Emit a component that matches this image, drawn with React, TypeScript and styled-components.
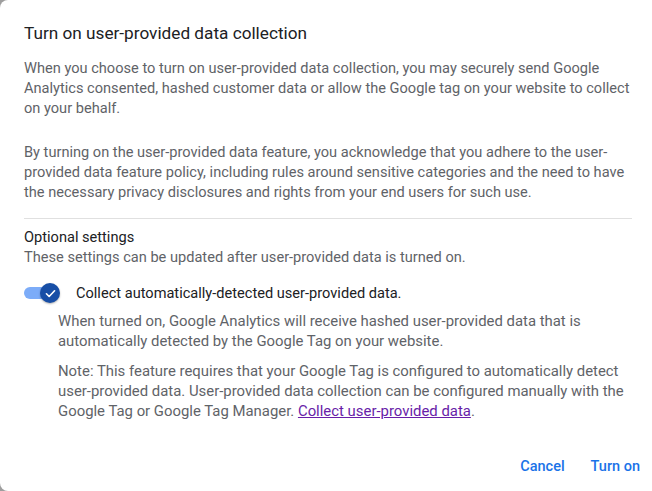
import React from 'react';
import styled, {createGlobalStyle} from 'styled-components';

const GlobalStyle = createGlobalStyle`
  html, body {
    margin: 0;
    padding: 0;
    background: #9e9e9e;
  }
  body {
    font-family: Roboto, "Liberation Sans", Arial, sans-serif;
    -webkit-font-smoothing: antialiased;
  }
`;

const Dialog = styled.div`
  width: 652px;
  height: 491px;
  box-sizing: border-box;
  background: #fff;
  border-radius: 8px 0 0 8px;
  display: flex;
  flex-direction: column;
`;

const Body = styled.div`
  flex: 1;
  padding: 21px 20px 0 24px;
`;

const Title = styled.h2`
  margin: 0 0 13px;
  font-size: 17.2px;
  line-height: 24px;
  font-weight: 400;
  color: #202124;
`;

const Paragraph = styled.p<{$gap: number}>`
  margin: 0 0 ${p => p.$gap}px;
  font-size: 14.6px;
  line-height: 20px;
  color: #5f6368;
`;

const Divider = styled.hr`
  border: none;
  border-top: 1px solid #e0e0e0;
  margin: 0 0 8px;
`;

const SectionTitle = styled.div`
  font-size: 14.6px;
  line-height: 20px;
  color: #202124;
`;

const SectionHint = styled.div`
  font-size: 14.6px;
  line-height: 20px;
  color: #5f6368;
`;

const ToggleRow = styled.label`
  display: flex;
  align-items: center;
  gap: 16px;
  margin-top: 16px;
  font-size: 14.6px;
  line-height: 20px;
  color: #202124;
  cursor: pointer;
`;

const Toggle = styled.span`
  position: relative;
  display: inline-block;
  width: 36px;
  height: 20px;
  flex: none;
`;

const Track = styled.span`
  position: absolute;
  left: 0;
  top: 4px;
  width: 30px;
  height: 12px;
  border-radius: 6px;
  background: #7cacf8;
`;

const Thumb = styled.span`
  position: absolute;
  right: 0;
  top: 0;
  width: 20px;
  height: 20px;
  border-radius: 50%;
  background: #174ea6;
  display: flex;
  align-items: center;
  justify-content: center;
  box-shadow: 0 1px 2px rgba(0, 0, 0, 0.3);
`;

const Details = styled.div`
  padding-left: 34px;
  margin-top: 8px;
`;

const Note = styled.p`
  margin: 0 0 10px;
  font-size: 14.9px;
  line-height: 20px;
  color: #5f6368;
`;

const Link = styled.a`
  color: #681da8;
  text-decoration: underline;
`;

const Actions = styled.div`
  display: flex;
  justify-content: flex-end;
  gap: 2px;
  padding: 0 0 6px;
`;

const TextButton = styled.button`
  background: none;
  border: none;
  padding: 8px 12px;
  font-family: Roboto, "Liberation Sans", Arial, sans-serif;
  font-size: 14.5px;
  font-weight: 500;
  line-height: 20px;
  color: #1a73e8;
  cursor: pointer;
`;

function CheckIcon() {
  return (
    <svg width="13" height="13" viewBox="0 0 24 24" fill="none">
      <path d="M4.5 12.5l5 5L19.5 7" stroke="#fff" strokeWidth="3" strokeLinecap="round" strokeLinejoin="round"/>
    </svg>
  );
}

export default function App() {
  return <>
    <GlobalStyle/>
    <Dialog>
      <Body>
        <Title>Turn on user-provided data collection</Title>
        <Paragraph $gap={24}>
          When you choose to turn on user-provided data collection, you may securely send Google
          Analytics consented, hashed customer data or allow the Google tag on your website to collect
          on your behalf.
        </Paragraph>
        <Paragraph $gap={16}>
          By turning on the user-provided data feature, you acknowledge that you adhere to the user-provided
          data feature policy, including rules around sensitive categories and the need to have
          the necessary privacy disclosures and rights from your end users for such use.
        </Paragraph>
        <Divider/>
        <SectionTitle>Optional settings</SectionTitle>
        <SectionHint>These settings can be updated after user-provided data is turned on.</SectionHint>
        <ToggleRow>
          <Toggle>
            <Track/>
            <Thumb><CheckIcon/></Thumb>
          </Toggle>
          Collect automatically-detected user-provided data.
        </ToggleRow>
        <Details>
          <Note>
            When turned on, Google Analytics will receive hashed user-provided data that is
            automatically detected by the Google Tag on your website.
          </Note>
          <Note>
            Note: This feature requires that your Google Tag is configured to automatically detect
            user-provided data. User-provided data collection can be configured manually with the
            Google Tag or Google Tag Manager. <Link href="#">Collect user-provided data</Link>.
          </Note>
        </Details>
      </Body>
      <Actions>
        <TextButton>Cancel</TextButton>
        <TextButton>Turn on</TextButton>
      </Actions>
    </Dialog>
  </>;
}
